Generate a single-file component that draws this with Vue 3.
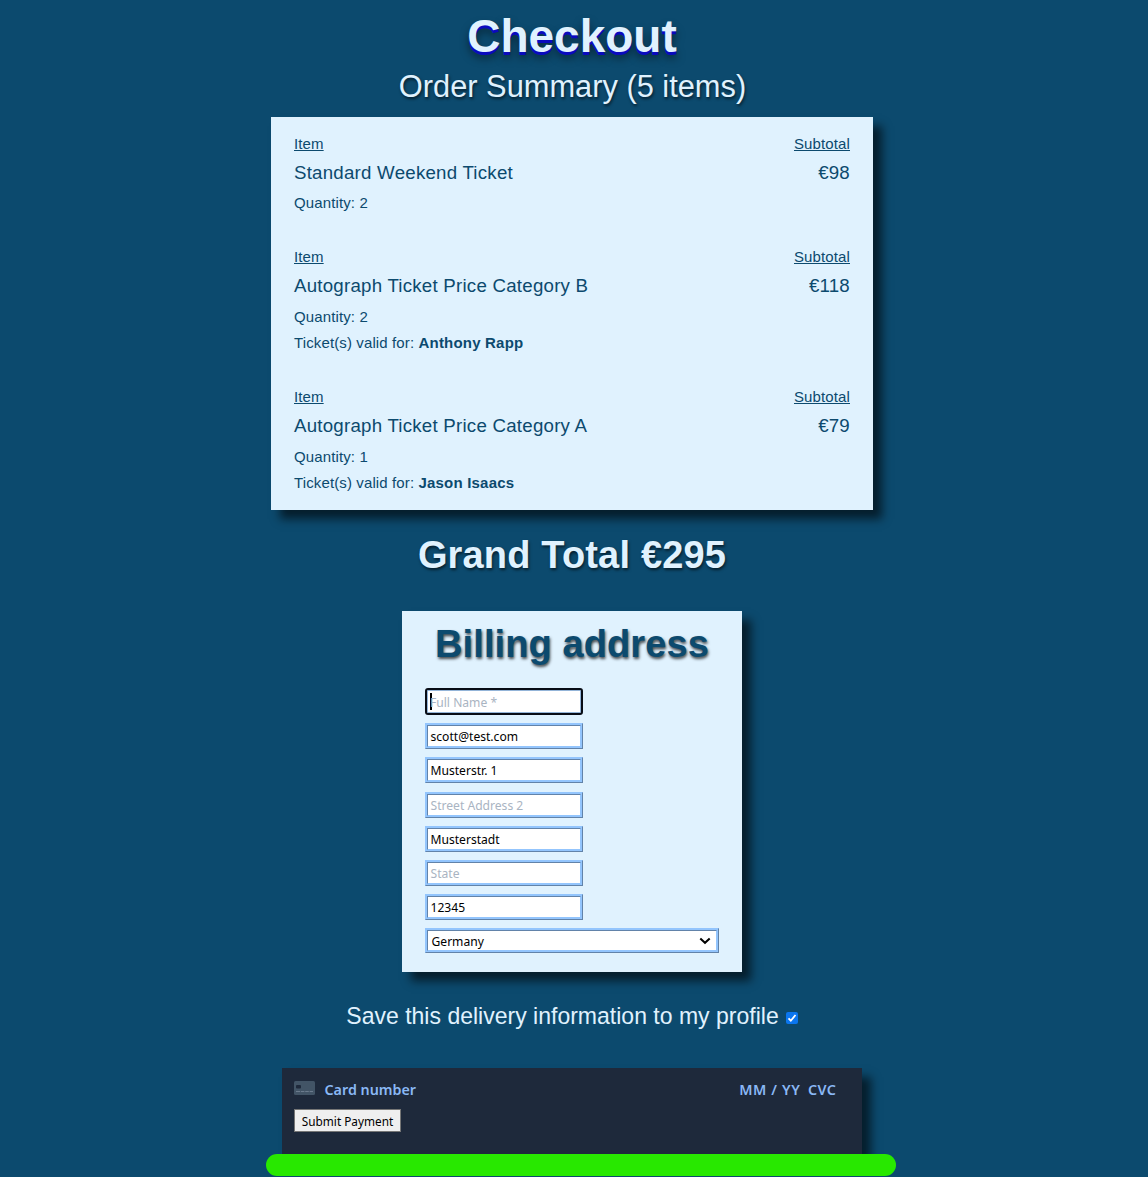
<script setup>
const items = [
  { name: 'Standard Weekend Ticket', quantity: 2, subtotal: 98 },
  { name: 'Autograph Ticket Price Category B', quantity: 2, subtotal: 118, guest: 'Anthony Rapp' },
  { name: 'Autograph Ticket Price Category A', quantity: 1, subtotal: 79, guest: 'Jason Isaacs' },
]
const fields = [
  { label: 'Full Name *', value: '', focused: true },
  { label: 'Email', value: 'scott@test.com' },
  { label: 'Street Address 1', value: 'Musterstr. 1' },
  { label: 'Street Address 2', value: '' },
  { label: 'City', value: 'Musterstadt' },
  { label: 'State', value: '' },
  { label: 'Postcode', value: '12345' },
]
</script>

<template>
  <main class="page">
    <h1><span>Checkout</span></h1>
    <p class="summary-title"><span>Order Summary (5 items)</span></p>

    <section class="summary">
      <article v-for="item in items" :key="item.name" class="item">
        <div class="row head"><u>Item</u><u>Subtotal</u></div>
        <div class="row name"><span>{{ item.name }}</span><span>€{{ item.subtotal }}</span></div>
        <div class="qty"><span>Quantity: {{ item.quantity }}</span></div>
        <div v-if="item.guest" class="guest"><span>Ticket(s) valid for: <b>{{ item.guest }}</b></span></div>
      </article>
    </section>

    <h2 class="total"><span>Grand Total €295</span></h2>

    <section class="billing">
      <h2><span>Billing address</span></h2>
      <div class="fields">
        <div v-for="f in fields" :key="f.label" class="field" :class="{ focused: f.focused }">
          <i v-if="f.focused" class="caret"></i>
          <span :class="{ placeholder: !f.value }">{{ f.value || f.label }}</span>
        </div>
        <div class="field select">
          <span>Germany</span>
          <svg width="12" height="8" viewBox="0 0 12 8"><path d="M1.3 1.4 6 5.8 10.7 1.4" fill="none" stroke="#000" stroke-width="2" /></svg>
        </div>
      </div>
    </section>

    <div class="save">
      <span>Save this delivery information to my profile</span>
      <svg width="12" height="12" viewBox="0 0 12 12"><rect width="12" height="12" rx="2" fill="#0b76ef" /><path d="M2.5 6.4 4.8 8.7 9.5 3" fill="none" stroke="#fff" stroke-width="1.8" /></svg>
    </div>

    <section class="payment">
      <div class="card-line">
        <svg width="21" height="14" viewBox="0 0 21 14">
          <rect width="21" height="14" rx="1.5" fill="#425466" />
          <rect x="2" y="4" width="5" height="3.5" rx="1" fill="#1e293b" />
          <path d="M2 10.5h4M6.8 10.5h3.6M11.2 10.5h3.6M15.6 10.5h3.4" stroke="#6b7b8d" stroke-width="1" />
        </svg>
        <span class="number">Card number</span>
        <span class="expiry">MM / YY</span>
        <span class="cvc">CVC</span>
      </div>
      <button type="button"><span>Submit Payment</span></button>
    </section>
    <div class="banner"></div>
  </main>
</template>

<style>
body {
  margin: 0;
  background: #0c4a6e;
}
</style>

<style scoped>
.page {
  box-sizing: border-box;
  height: 1177px;
  overflow: hidden;
  padding-right: 4px;
  display: flex;
  flex-direction: column;
  align-items: center;
  background: #0c4a6e;
  color: #e0f2fe;
  font-family: "Liberation Sans", Arial, sans-serif;
  white-space: nowrap;
}
h1, h2, p { margin: 0; }
h1 {
  height: 68px;
  font-size: 46px;
  line-height: 73px;
  text-shadow: 0 3px 0 #0a0abe, 0 6px 8px rgba(0, 0, 0, 0.5);
}
.summary-title {
  height: 49px;
  padding-left: 1px;
  font-size: 30.8px;
  line-height: 37px;
  text-shadow: 1px 2px 3px rgba(0, 0, 0, 0.6);
}
.summary, .billing, .payment { box-sizing: border-box; flex: none; }
.summary, .billing {
  background: #e0f2fe;
  color: #0c4a6e;
  box-shadow: 9px 9px 9px rgba(0, 0, 0, 0.6);
}
.summary {
  width: 602px;
  height: 393px;
  padding: 14px 23px;
  display: flex;
  flex-direction: column;
  gap: 25px;
  font-size: 15px;
  letter-spacing: 0.12px;
}
.row { display: flex; justify-content: space-between; }
.head { line-height: 26px; }
u { text-decoration-thickness: 1px; text-underline-offset: 1px; }
.name { font-size: 18.7px; line-height: 31px; letter-spacing: 0.23px; }
.qty { line-height: 31px; }
.item:first-child .qty { line-height: 29px; padding-bottom: 2px; }
.guest { line-height: 22px; margin-bottom: 5px; }
.guest b { letter-spacing: 0.2px; }
.total {
  height: 101px;
  font-size: 38px;
  line-height: 90px;
  letter-spacing: 0.17px;
  text-shadow: 1px 2px 3px rgba(0, 0, 0, 0.6);
}
.billing { width: 340px; height: 361px; padding: 0 23px; }
.billing h2 {
  height: 77px;
  text-align: center;
  font-size: 38px;
  line-height: 66px;
  letter-spacing: 0.1px;
  text-shadow: 1px 2px 3px rgba(0, 0, 0, 0.7);
}
.fields {
  display: flex;
  flex-direction: column;
  gap: 8.2px;
  font: 12.1px/20px "Noto Sans", sans-serif;
  color: #000;
}
.field {
  box-sizing: border-box;
  width: 158px;
  height: 26px;
  display: flex;
  align-items: center;
  padding: 2px 0 0 2.5px;
  border: 3px ridge #93c5fd;
  background: #fff;
}
.field.focused {
  height: 27px;
  border: 2px solid #080d16;
  border-radius: 3px;
  box-shadow: inset 0 0 0 1px #93b4d8;
  padding-left: 3px;
}
.caret { width: 2px; height: 17px; margin: -2px -2px 0 0; background: #000; }
.placeholder { color: #a9b4c2; }
.select { width: 294px; height: 25px; justify-content: space-between; padding-left: 3.5px; padding-right: 5px; }
.select svg { margin-top: -2px; }
.save {
  box-sizing: border-box;
  height: 96px;
  padding-bottom: 8px;
  display: flex;
  align-items: center;
  gap: 7px;
  font-size: 23.03px;
}
.save svg { margin-top: 4px; }
.payment {
  width: 580px;
  height: 86px;
  padding: 9px 12px 0;
  background: #1e293b;
  box-shadow: 9px 9px 9px rgba(0, 0, 0, 0.6);
}
.card-line {
  display: flex;
  align-items: center;
  height: 25px;
  color: #8ab8f5;
  font: 600 14.3px/25px "Noto Sans", sans-serif;
}
.card-line svg { margin-top: -3px; }
.number { margin-left: 9.5px; }
.expiry { margin-left: auto; letter-spacing: 0.6px; }
.cvc { margin: 0 13.5px 0 7.5px; letter-spacing: 0.5px; }
button {
  display: block;
  box-sizing: border-box;
  width: 107px;
  height: 23px;
  margin-top: 7px;
  padding: 1px 0 0;
  border: 1px solid #767676;
  background: #efefef;
  color: #000;
  font: 11.8px/20px "Noto Sans", sans-serif;
}
.banner {
  flex: none;
  width: 630px;
  height: 22px;
  margin-left: 18px;
  border-radius: 11px;
  background: #28e800;
  position: relative;
}
</style>
